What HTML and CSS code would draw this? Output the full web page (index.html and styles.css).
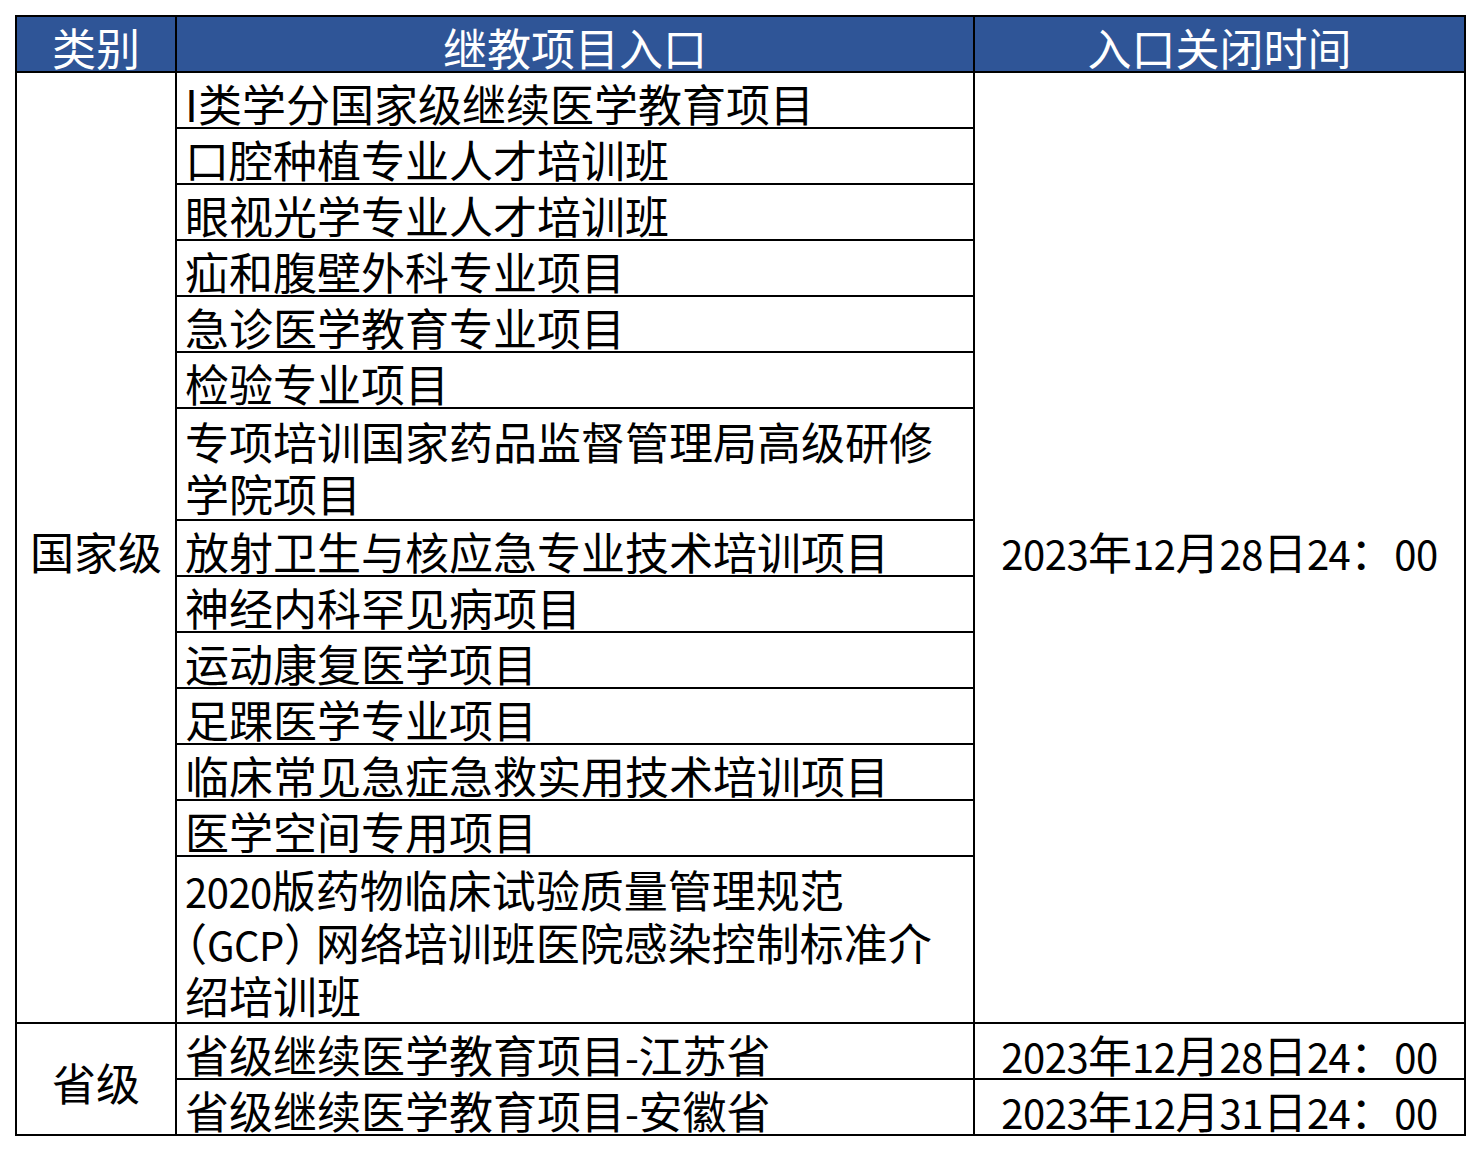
FILE: index.html
```html
<!DOCTYPE html>
<html lang="zh-CN">
<head>
<meta charset="utf-8">
<title>继教项目入口</title>
<link rel="stylesheet" href="styles.css">
</head>
<body>
<table class="grid">
  <colgroup>
    <col class="c1">
    <col class="c2">
    <col class="c3">
  </colgroup>
  <thead>
    <tr class="head">
      <th>类别</th>
      <th>继教项目入口</th>
      <th>入口关闭时间</th>
    </tr>
  </thead>
  <tbody>
    <tr>
      <td class="cat" rowspan="14">国家级</td>
      <td class="item">I类学分国家级继续医学教育项目</td>
      <td class="date" rowspan="14"><span class="num">2023</span>年<span class="num">12</span>月<span class="num">28</span>日<span class="num">24</span>：<span class="num">00</span></td>
    </tr>
    <tr><td class="item">口腔种植专业人才培训班</td></tr>
    <tr><td class="item">眼视光学专业人才培训班</td></tr>
    <tr><td class="item">疝和腹壁外科专业项目</td></tr>
    <tr><td class="item">急诊医学教育专业项目</td></tr>
    <tr><td class="item">检验专业项目</td></tr>
    <tr><td class="item two">专项培训国家药品监督管理局高级研修<br>学院项目</td></tr>
    <tr><td class="item">放射卫生与核应急专业技术培训项目</td></tr>
    <tr><td class="item">神经内科罕见病项目</td></tr>
    <tr><td class="item">运动康复医学项目</td></tr>
    <tr><td class="item">足踝医学专业项目</td></tr>
    <tr><td class="item">临床常见急症急救实用技术培训项目</td></tr>
    <tr><td class="item">医学空间专用项目</td></tr>
    <tr><td class="item three"><span class="num">2020</span>版药物临床试验质量管理规范<br><span class="half">（</span><span class="num">GCP</span><span class="half">）</span> 网络培训班医院感染控制标准介<br>绍培训班</td></tr>
    <tr>
      <td class="cat" rowspan="2">省级</td>
      <td class="item">省级继续医学教育项目<span class="num">-</span>江苏省</td>
      <td class="date"><span class="num">2023</span>年<span class="num">12</span>月<span class="num">28</span>日<span class="num">24</span>：<span class="num">00</span></td>
    </tr>
    <tr>
      <td class="item">省级继续医学教育项目<span class="num">-</span>安徽省</td>
      <td class="date"><span class="num">2023</span>年<span class="num">12</span>月<span class="num">31</span>日<span class="num">24</span>：<span class="num">00</span></td>
    </tr>
  </tbody>
</table>
</body>
</html>
```
FILE: styles.css
```css
html, body {
  margin: 0;
  padding: 0;
  background: #ffffff;
}

body {
  padding: 15px 0 0 15px;
  font-family: "Noto Sans CJK SC", "Noto Sans", sans-serif;
  color: #000000;
}

.grid {
  border-collapse: collapse;
  table-layout: fixed;
  width: 1449px;
  font-size: 44px;
}

.c1 { width: 160px; }
.c2 { width: 798px; }
.c3 { width: 491px; }

.grid th,
.grid td {
  border: 2px solid #000000;
  padding: 6px 0 0 0;
  line-height: 48px;
  height: 48px;
  font-weight: 400;
  white-space: nowrap;
  box-sizing: content-box;
}

.head th {
  background: #2f5597;
  color: #ffffff;
  text-align: center;
}

.cat {
  text-align: center;
  vertical-align: middle;
}

.item {
  text-align: left;
  vertical-align: top;
}

.grid td.item {
  padding-left: 8px;
}

.grid td.two {
  line-height: 52px;
}

.grid td.three {
  line-height: 53px;
}

.date {
  text-align: center;
  vertical-align: middle;
}

.num {
  font-size: 40px;
  line-height: 36px;
  letter-spacing: -0.5px;
}

.half {
  font-feature-settings: "halt" 1;
}
```
